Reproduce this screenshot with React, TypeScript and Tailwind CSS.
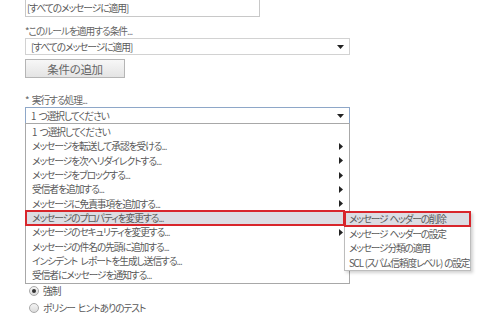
import React from "react";

const actions = [
  { label: "1 つ選択してください", sub: false },
  { label: "メッセージを転送して承認を受ける...", sub: true },
  { label: "メッセージを次へリダイレクトする...", sub: true },
  { label: "メッセージをブロックする...", sub: true },
  { label: "受信者を追加する...", sub: true },
  { label: "メッセージに免責事項を追加する...", sub: true },
  { label: "メッセージのプロパティを変更する...", sub: true, active: true },
  { label: "メッセージのセキュリティを変更する...", sub: true },
  { label: "メッセージの件名の先頭に追加する...", sub: false },
  { label: "インシデント レポートを生成し送信する...", sub: false },
  { label: "受信者にメッセージを通知する...", sub: false },
];

const subActions = [
  "メッセージ ヘッダーの削除",
  "メッセージ ヘッダーの設定",
  "メッセージ分類の適用",
  "SCL (スパム信頼度レベル) の設定",
];

function DownArrow() {
  return (
    <svg width="7" height="4" viewBox="0 0 7 4" className="shrink-0">
      <path d="M0 0h7L3.5 4z" fill="#222" />
    </svg>
  );
}

function RightArrow() {
  return (
    <svg width="4" height="7" viewBox="0 0 4 7" className="shrink-0">
      <path d="M0 0v7l4-3.5z" fill="#222" />
    </svg>
  );
}

function Radio({ checked, label }: { checked?: boolean; label: string }) {
  return (
    <div className="flex items-center h-[17px] pl-[4px] gap-[4px]">
      <span className="w-[10px] h-[10px] rounded-full border border-[#a9a9a9] bg-gradient-to-b from-[#f4f4f4] to-[#dcdcdc] flex items-center justify-center">
        {checked && <span className="w-[4px] h-[4px] rounded-full bg-[#333]" />}
      </span>
      <span>{label}</span>
    </div>
  );
}

export default function App() {
  return (
    <div className="w-[480px] h-[320px] overflow-hidden bg-white text-[#5a5a5a] text-[9.7px] leading-[14px] tracking-[-1px] [word-spacing:2px] whitespace-nowrap [font-family:'Noto_Sans_CJK_JP','Noto_Sans',sans-serif] [font-feature-settings:'palt']">
      <div className="pl-[25px]">
        <div className="-mt-px w-[235px] h-[18px] border border-[#c8c8c8] flex items-center pl-[1px]">
          [すべてのメッセージに適用]
        </div>

        <div className="mt-[7px] h-[14px] text-[#666]">*このルールを適用する条件...</div>

        <div className="w-[325px] h-[17px] border border-[#d2d2d2] flex items-center justify-between pl-[5px] pr-[5px]">
          <span>[すべてのメッセージに適用]</span>
          <DownArrow />
        </div>

        <button className="mt-[4px] w-[100px] h-[19px] border border-[#b5b5b5] bg-gradient-to-b from-[#f7f7f7] to-[#e4e4e4] text-[11.5px] tracking-[-0.3px] text-[#666] flex items-center justify-center">
          条件の追加
        </button>

        <div className="mt-[15px] h-[14px] text-[#666]">* 実行する処理...</div>

        <div className="relative w-[325px]">
          <div className="h-[17px] border border-[#8ea7c8] flex items-center justify-between pl-[5px] pr-[5px]">
            <span>1 つ選択してください</span>
            <DownArrow />
          </div>

          <div className="absolute left-0 top-[16px] w-[325px] z-10 bg-white border border-[#a8a8a8] pt-[1px] pb-px">
            {actions.map((a) => (
              <div
                key={a.label}
                className={
                  a.active
                    ? "relative h-[14.3px] flex items-center justify-between pl-[6px] pr-[6px] bg-[#dcdde3] mr-[5px] outline-2 -outline-offset-1 outline-[#d8262c]"
                    : "h-[14.3px] flex items-center justify-between pl-[6px] pr-[6px]"
                }
              >
                <span>{a.label}</span>
                {a.sub && !a.active && <RightArrow />}
                {a.active && (
                  <div className="absolute left-[318px] top-0 w-[127px] bg-white border border-[#bdbdbd] shadow-[2px_2px_3px_rgba(0,0,0,0.18)] tracking-[-1.15px] [word-spacing:1px]">
                    {subActions.map((s, i) => (
                      <div
                        key={s}
                        className={
                          i === 0
                            ? "h-[14.5px] flex items-center pl-[4px] bg-[#dcdde3] outline-2 -outline-offset-1 outline-[#d8262c]"
                            : "h-[14.5px] flex items-center pl-[4px]"
                        }
                      >
                        {s}
                      </div>
                    ))}
                  </div>
                )}
              </div>
            ))}
          </div>
        </div>

        <div className="mt-[158px] flex flex-col">
          <Radio checked label="強制" />
          <Radio label="ポリシー ヒントありのテスト" />
        </div>
      </div>
    </div>
  );
}
